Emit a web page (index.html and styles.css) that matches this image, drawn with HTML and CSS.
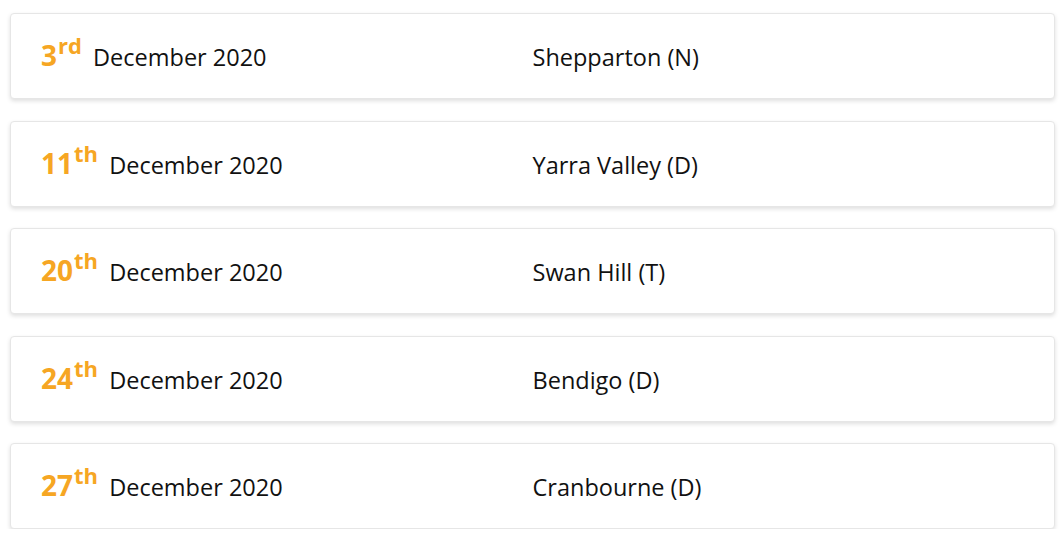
FILE: index.html
```html
<!DOCTYPE html>
<html>
<head>
<meta charset="utf-8">
<link rel="stylesheet" href="styles.css">
</head>
<body>
<div class="list">
  <div class="card"><div class="date"><span class="day">3<sup>rd</sup></span> December 2020</div><div class="venue">Shepparton (N)</div></div>
  <div class="card"><div class="date"><span class="day">11<sup>th</sup></span> December 2020</div><div class="venue">Yarra Valley (D)</div></div>
  <div class="card"><div class="date"><span class="day">20<sup>th</sup></span> December 2020</div><div class="venue">Swan Hill (T)</div></div>
  <div class="card"><div class="date"><span class="day">24<sup>th</sup></span> December 2020</div><div class="venue">Bendigo (D)</div></div>
  <div class="card"><div class="date"><span class="day">27<sup>th</sup></span> December 2020</div><div class="venue">Cranbourne (D)</div></div>
</div>
</body>
</html>
```

FILE: styles.css
```css
html, body {
  margin: 0;
  padding: 0;
  background: #fff;
}
body {
  font-family: "Open Sans", "Noto Sans", sans-serif;
  color: #111;
}
.list {
  display: flex;
  flex-direction: column;
  gap: 21.5px;
  padding: 13px 9px 0 10px;
}
.card {
  display: grid;
  grid-template-columns: 1fr 1fr;
  align-items: center;
  height: 86px;
  box-sizing: border-box;
  padding: 2px 30px 0 30px;
  border: 1px solid #e6e6e6;
  border-radius: 4px;
  background: #fff;
  box-shadow: 0 2px 4px rgba(0,0,0,0.13);
  font-size: 23.5px;
  line-height: 32px;
}
.date, .venue {
  white-space: nowrap;
}
.day {
  color: #f6a623;
  font-weight: 700;
  font-size: 28px;
  line-height: 0;
  margin-right: 5px;
}
.day sup {
  font-size: 22px;
  line-height: 0;
  vertical-align: 0;
  position: relative;
  top: -12px;
  margin-left: 1px;
}
```
